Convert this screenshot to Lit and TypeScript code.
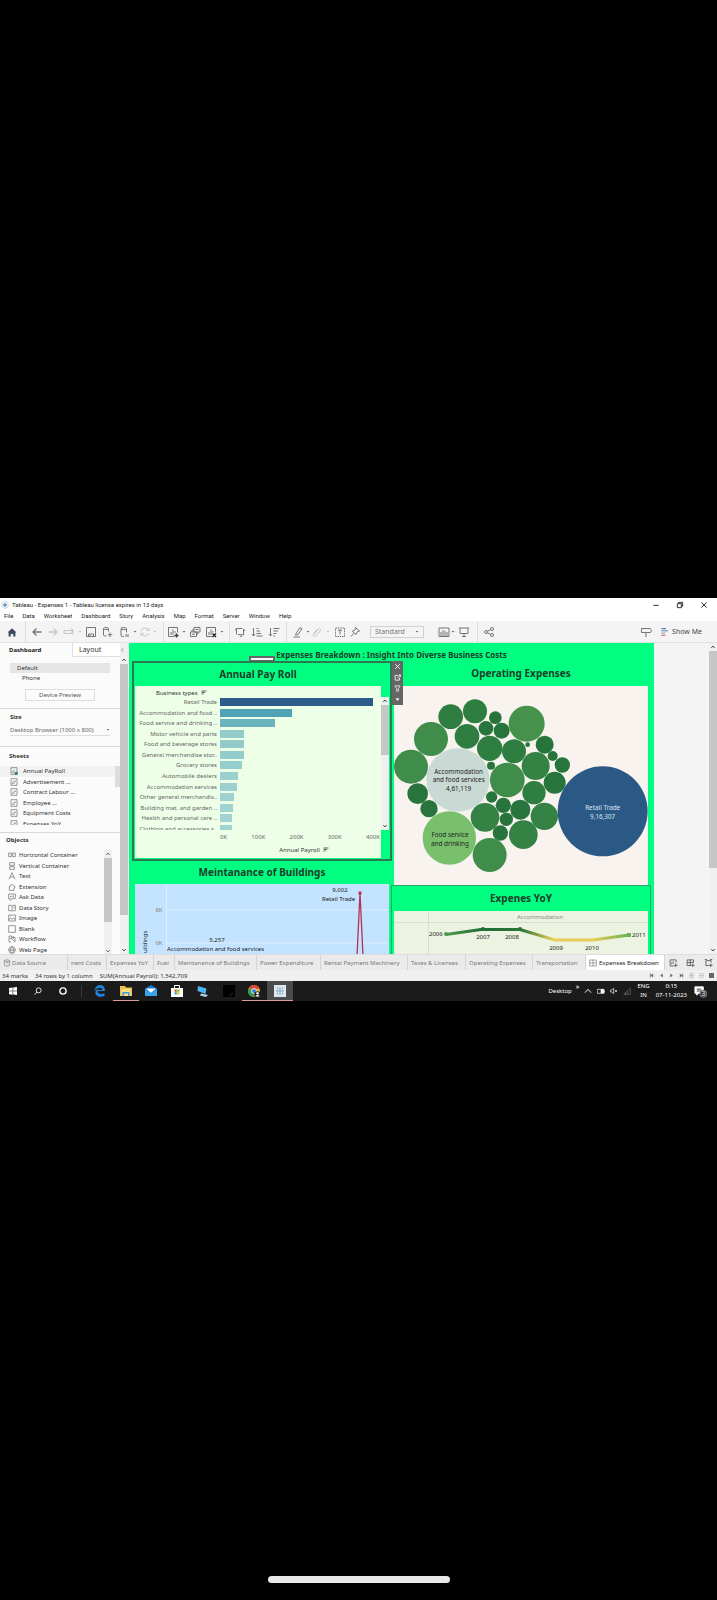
import { LitElement, html, svg, css, nothing } from "lit";
import { customElement, state } from "lit/decorators.js";

type Tool = { icon: string; gap: number; label?: string; dim?: boolean };

/* Glyphs are drawn on a 12 x 12 field. */
const glyphs: Record<string, unknown> = {
  home: svg`<path d="M1.500 6.500 6 2.200l4.500 4.300H9.400v4H7.200V8H4.800v2.500H2.600v-4z" fill="#3f4b5c" stroke="none"/>`,
  back: svg`<path d="M10.500 6H2M5.500 2.500 2 6l3.500 3.500" stroke-width="1.300"/>`,
  forward: svg`<path d="M1.500 6H10M6.500 2.500 10 6 6.500 9.500" stroke-width="1.300"/>`,
  replay: svg`<path d="M1 4.500h9v3H1zM8 2.500l2.500 2L8 6.500"/>`,
  save: svg`<path d="M1.500 1.500h9v9h-9zM3.500 10V8h5v2M5 9v1.500"/>`,
  datanew: svg`<path d="M2.500 2.500c0-1.300 5-1.300 5 0v3M2.500 2.500v6.500c0 .8 1.500 1 3 1M2.500 2.700c0 1.200 5 1.200 5 0M9 6.500v4.500M6.800 8.700h4.500"/>`,
  datapause: svg`<path d="M3 2.500c0-1.300 5.500-1.300 5.500 0v4M3 2.500v7c0 .8 1.500 1 3 1M3 2.700c0 1.200 5.500 1.200 5.500 0M8 8v3M10 8v3"/>`,
  refresh: svg`<path d="M10 4.500A4.300 4.300 0 0 0 2 5M2 7.500A4.300 4.300 0 0 0 10 7M10 2v2.500H7.500M2 10V7.500h2.500"/>`,
  chartnew: svg`<path d="M7.500 10.500h-6v-9h9v5M4 9V6M6 9V3.500M8 7V5"/><path d="M9.500 7.500v4M7.500 9.500h4" stroke="#333" stroke-width="1.300"/>`,
  duplicate: svg`<path d="M5 1.500h6v4.500H5zM1.500 6h6v4.500h-6zM3 6V4h2M9 6v2H7.500M6.500 3.500h3M3 8.300h3"/>`,
  chartclear: svg`<path d="M7 10.500H1.500v-9h9v5M4 9V6M6 9V3.500M8 6.500V5"/><path d="m7.500 7.500 3.500 3.500m0-3.500L7.500 11" stroke="#222" stroke-width="1.300"/>`,
  swap: svg`<path d="M2.500 8.500v-6h6M2.500 2.500 1 4.500M4 8.500 9.500 9V3M8 9.500l-2 1.500M9.500 3l1.500 2"/>`,
  sortasc: svg`<path d="M2.500 2v8M1 8.200 2.500 10 4 8.200M5.500 10h6M5.500 7.500h4.500M5.500 5h3.500M5.500 2.500h2"/>`,
  sortdesc: svg`<path d="M2.500 2v8M1 8.200 2.500 10 4 8.200M5.500 2.500h6M5.500 5h4.500M5.500 7.500h3M5.500 10h1.500"/>`,
  pen: svg`<path d="M4 7.500 8 1.500l2 1.300L6 8.500 3.500 9zM1.500 11H8"/>`,
  clip: svg`<path d="M3 8.500 7.500 3c1-1.200 3 .2 2 1.500L5 10c-1.200 1.500-3.800-.5-2.500-2L6.500 3"/>`,
  text: svg`<path d="M1.500 2h9v8.500h-9z" stroke-dasharray="1.500 .8"/><path d="M4 4.200h4M6 4.200V8.500"/>`,
  pin: svg`<path d="m6.500 1.500 4 3.500-2 .5-1.500 3-3.700-3.200L6 4zM4.500 7.500 2 10.500"/>`,
  cards: svg`<path d="M1 2h10v8.500H1zM3 10V6M5 10V4M7 10V5M9 10V6"/>`,
  present: svg`<path d="M1 2h10M2 2v5.500h8V2M6 7.500v3M4 10.500h4"/>`,
  share: svg`<circle cx="3" cy="6" r="1.500"/><circle cx="9" cy="3" r="1.500"/><circle cx="9" cy="9" r="1.500"/><path d="m4.300 5.300 3.400-1.600M4.300 6.700l3.400 1.600"/>`,
  guide: svg`<path d="M1.500 2.500h9l1 2-1 2h-9zM6 6.500V11"/>`,
  showme: svg`<path d="M2 1h7" stroke="#4471a8" stroke-width="1.600"/><path d="M2 4.300h10" stroke="#4471a8" stroke-width="1.300"/><path d="M2 7.600h6" stroke="#888" stroke-width="1.300"/><path d="M2 11h6" stroke="#e05a5a" stroke-width="1.600"/>`,
  sheet: svg`<path d="M1.500 1h9v10h-9zM4 9V6.500M6 9V4M8 6V4"/>`,
  sheetused: svg`<path d="M1.500 1h9v10h-9zM4 9V6.500M6 9V4"/><circle cx="9.500" cy="9.500" r="2.500" fill="#2a7f93" stroke="none"/>`,
  hbox: svg`<path d="M1 3h4v5.500H1zM7 3h4v5.500H7z"/>`,
  vbox: svg`<path d="M2.500 1h7v4h-7zM2.500 7h7v4h-7z"/>`,
  letter: svg`<path d="M1.500 11 6 1l4.500 10M3.200 7.500h5.600"/>`,
  extension: svg`<path d="M2 5h2c-1-3 3-4 4-1l3 2-2 1.500V11H2z"/>`,
  ask: svg`<path d="M1 1.500h10v7H6L3 11V8.500H1zM4 6.500v-2M6 6.500V4M8 6.500V3.500"/>`,
  story: svg`<path d="M1 2h4l1 1 1-1h4v8H7l-1 1-1-1H1zM6 3v7M8 5h2"/>`,
  image: svg`<path d="M1 1.500h10v9H1zM1 9l3-3 2.500 2L8.500 6 11 8.500M4 3.500v1"/>`,
  blank: svg`<path d="M1 1h10v10H1z"/>`,
  workflow: svg`<path d="M1.500 1.500h4v4h-4zM5.500 3.500h5v7M1.500 6v4.500h3M6 6l4 4M8 2v4"/>`,
  globe: svg`<circle cx="6" cy="6" r="5"/><path d="M1 6h10M6 1c-3 3-3 7 0 10M6 1c3 3 3 7 0 10"/>`,
  cylinder: svg`<path d="M2 2.500c0-1.500 8-1.500 8 0v7c0 1.500-8 1.500-8 0zM2 3c0 1.500 8 1.500 8 0M5 6h3"/>`,
  dash: svg`<path d="M1 1.500h10v9H1zM6 1.500v9M1 6h10"/>`,
  newsheet: svg`<path d="M7 10.500H1.500v-8h8V6M3.500 8V6M5.500 8V4.500M9 7.500V12M7 9.700h4.500"/>`,
  newdash: svg`<path d="M7 10H1.500V2.500h8.500V6M5.700 2.500V10M1.500 6H10M9 7.500V12M7 9.700h4.500"/>`,
  newstory: svg`<path d="M7 10H2.500V3.500h7V6M1 2h3M8 2h3M9 7.500V12M7 9.700h4.500"/>`,
  close: svg`<path d="m2 2 8 8m0-8-8 8" stroke-width="1.500"/>`,
  open: svg`<path d="M7 2.500H2v8h7.500V6M6 7l5-5.500M8 1.500h3V5" stroke-width="1.400"/>`,
  funnel: svg`<path d="M1.500 1.500h9L7.500 6v4.500h-3V6z" stroke-width="1.300"/>`,
  more: svg`<path d="m3.500 4.500 2.500 3 2.500-3z" fill="currentColor"/>`,
  up: svg`<path d="m2.500 8 3.500-4 3.500 4" stroke-width="1.800"/>`,
  down: svg`<path d="m2.500 4 3.500 4 3.500-4" stroke-width="1.800"/>`,
  sorted: svg`<path d="M1 2h10M1 5h7M1 8h4" stroke-width="1.500"/>`,
};

const glyph = (name: string, cls = "") =>
  html`<svg class="glyph ${cls}" viewBox="0 0 12 12" aria-hidden="true">${glyphs[name]}</svg>`;

const tools: Tool[] = [
  { icon: "home", gap: 6, label: "Start page" },
  { icon: "|", gap: 7 },
  { icon: "back", gap: 5, label: "Undo" },
  { icon: "forward", gap: 4, label: "Redo", dim: true },
  { icon: "replay", gap: 4, label: "Replay", dim: true },
  { icon: "v", gap: 3, dim: true },
  { icon: "save", gap: 3, label: "Save" },
  { icon: "datanew", gap: 4, label: "New data source" },
  { icon: "datapause", gap: 5, label: "Pause updates" },
  { icon: "v", gap: 3 },
  { icon: "refresh", gap: 2, label: "Run update", dim: true },
  { icon: "v", gap: 2, dim: true },
  { icon: "|", gap: 6 },
  { icon: "chartnew", gap: 3, label: "New worksheet" },
  { icon: "v", gap: 3 },
  { icon: "duplicate", gap: 3, label: "Duplicate" },
  { icon: "chartclear", gap: 4, label: "Clear sheet" },
  { icon: "v", gap: 3 },
  { icon: "|", gap: 5 },
  { icon: "swap", gap: 4, label: "Swap" },
  { icon: "sortasc", gap: 5, label: "Sort ascending" },
  { icon: "sortdesc", gap: 5, label: "Sort descending" },
  { icon: "|", gap: 6 },
  { icon: "pen", gap: 5, label: "Highlight" },
  { icon: "v", gap: 2 },
  { icon: "clip", gap: 1, label: "Group members", dim: true },
  { icon: "v", gap: 3, dim: true },
  { icon: "text", gap: 4, label: "Show mark labels" },
  { icon: "pin", gap: 3, label: "Fix axes" },
  { icon: "fit", gap: 9 },
  { icon: "cards", gap: 14, label: "Show cards" },
  { icon: "v", gap: 1 },
  { icon: "present", gap: 3, label: "Presentation mode" },
  { icon: "|", gap: 7 },
  { icon: "share", gap: 5, label: "Share" },
];

const payroll: [string, number, string][] = [
  ["Retail Trade", 153, "#2b5c8a"],
  ["Accommodation and food ..", 72, "#4fa3b5"],
  ["Food service and drinking ..", 55, "#6ab4be"],
  ["Motor vehicle and parts", 24, "#93cbcb"],
  ["Food and beverage stores", 24, "#93cbcb"],
  ["General merchandise stor..", 24, "#94cccc"],
  ["Grocery stores", 22, "#96cdcd"],
  ["Automobile dealers", 18, "#9ad0ce"],
  ["Accommodation services", 17, "#9bd0ce"],
  ["Other general merchandis..", 14, "#9ed2d0"],
  ["Building mat. and garden ..", 13, "#9fd3d1"],
  ["Health and personal care ..", 12, "#a0d3d1"],
  ["Clothing and accessories s..", 12, "#a0d3d1"],
];

/* cx, cy, r: one bubble for each business type */
const bubbles: [number, number, number][] = [
  [182, 230, 37], [255, 214, 36], [316, 233, 19], [123, 297, 51], [288, 265, 22],
  [335, 272, 24], [410, 251, 54], [231, 289, 37], [299, 325, 38], [372, 334, 36],
  [413, 314, 7], [464, 314, 27], [488, 348, 15], [517, 375, 23], [63, 380, 51],
  [303, 377, 12], [437, 378, 42], [494, 428, 33], [352, 420, 52], [432, 458, 35],
  [83, 461, 31], [117, 506, 26], [305, 471, 17], [340, 496, 23], [391, 509, 30],
  [285, 532, 43], [349, 538, 20], [463, 529, 41], [331, 579, 23], [400, 584, 43],
  [299, 645, 51],
];
const bubbleFill = (r: number) =>
  r > 52 ? "#46924d" : r > 45 ? "#408d4b" : r > 39 ? "#348345" : r > 34 ? "#2e7d41" : "#27753c";

const sheets = ["Annual PayRoll", "Advertisement ...", "Contract Labour ...", "Employee ...", "Equipment Costs", "Expenses YoY"];
const objects: [string, string][] = [
  ["hbox", "Horizontal Container"], ["vbox", "Vertical Container"], ["letter", "Text"],
  ["extension", "Extension"], ["ask", "Ask Data"], ["story", "Data Story"],
  ["image", "Image"], ["blank", "Blank"], ["workflow", "Workflow"], ["globe", "Web Page"],
];
const tabs: [string, number][] = [
  ["nent Costs", 39], ["Expenses YoY", 47], ["Fuel", 21], ["Meintanance of Buildings", 82],
  ["Power Expenditure", 64], ["Rental Payment Machinery", 87], ["Taxes & Licenses", 58],
  ["Operating Expenses", 67], ["Transportation", 53],
];

const apps: [string, boolean, boolean, unknown][] = [
  ["Edge", false, false, svg`<path d="M1.500 7C2 3 4.500 1 7 1c3.500 0 5 2.500 5 6H4.500c.3 3.500 4.500 3.500 7 2.200v2.500C7.500 14 1.500 12.500 2.500 7.500 3 6 4.500 5 5.500 4.500 4.800 5 4.500 5.800 4.500 6h5C9 2.500 4 3 1.500 7z" fill="#1d84dc"/>`],
  ["File Explorer", true, false, svg`<path d="M1 2h5l1 1.500h6V12H1z" fill="#f0c14b"/><path d="M2.500 5h9v7h-9z" fill="#fbe08a"/><path d="M3.500 8h7v4H9V9.500H5V12H3.500z" fill="#3f9be0"/>`],
  ["Mail", false, false, svg`<path d="M1 4.500 7 1l6 3.500V12H1z" fill="#1674c9"/><path d="M2 4.500h10L7 9z" fill="#fff"/><path d="m1 5 6 4.500L13 5v7H1z" fill="#38a3ee"/>`],
  ["Store", false, false, svg`<path d="M4.500 4V1.500h5V4" fill="none" stroke="#fff"/><path d="M1 4h12v9H1z" fill="#fff"/><path d="M4.500 5.500h2.300v2.300H4.500z" fill="#e6502e"/><path d="M7.200 5.500h2.300v2.300H7.200z" fill="#7dba2c"/><path d="M4.500 8.200h2.300v2.300H4.500z" fill="#2a9de0"/><path d="M7.200 8.200h2.300v2.300H7.200z" fill="#f5ba2a"/>`],
  ["Remote PC", false, false, svg`<path d="m2 2 8.500 2.500L9.500 10 1.500 7z" fill="#4db4ee"/><path d="m5 9.500 7 1.500-2 2-6-1.500z" fill="#b9d7ea"/>`],
  ["Terminal", false, false, svg`<path d="M1 1h12v12H1z" fill="#000"/><path d="M10 8v3H7" stroke="#152638" fill="none"/>`],
  ["Chrome", true, false, svg`<circle cx="7" cy="7" r="6" fill="#e2b62c"/><path d="M7 7 1.800 4A6 6 0 0 1 12.200 4z" fill="#dd4636"/><path d="M7 7 1.800 4A6 6 0 0 0 7 13z" fill="#2d9e53"/><circle cx="7" cy="7" r="2.700" fill="#fff"/><circle cx="7" cy="7" r="2" fill="#3b7de0"/><circle cx="10.500" cy="10.500" r="3.300" fill="#222"/><circle cx="10.500" cy="9.300" r="1.200" fill="#fff"/><path d="M8.500 12.500c.5-2 3.500-2 4 0z" fill="#fff"/>`],
  ["Tableau", true, true, svg`<path d="M1 1h12v12H1z" fill="#dfe8ee"/><path d="M7 3v8M3 7h8M4.500 3.500v2M9.500 3.500v2M4.500 8.500v2M9.500 8.500v2" stroke="#7fa3bd" fill="none"/>`],
];

@customElement("app-root")
export class AppRoot extends LitElement {
  @state() private fit = "Standard";

  static styles = css`
    :host {
      display: flex;
      flex-direction: column;
      justify-content: center;
      position: relative;
      box-sizing: border-box;
      min-height: 100vh;
      padding-bottom: 1px;
      background: #000;
      color: #333;
      font: 6px/10px "Noto Sans", "Open Sans", sans-serif;
    }
    * { box-sizing: border-box; }
    button, select {
      font: inherit; color: inherit; background: none; border: 0; padding: 0; margin: 0;
      white-space: nowrap; appearance: none;
    }
    ul { list-style: none; margin: 0; padding: 0; }
    h1, h2, h3, p { margin: 0; font-size: inherit; font-weight: 700; }
    svg { display: block; }
    .glyph { width: 8px; height: 8px; fill: none; stroke: currentColor; stroke-width: 1; flex: none; }
    .window { background: #f4f4f4; }
    .titlebar { display: flex; align-items: center; height: 13px; background: #fff; padding: 0 8px 0 1px; gap: 3px; }
    .titlebar h1 { flex: 1; font: 6px/10px Roboto, "Noto Sans", sans-serif; color: #222; }
    .titlebar .caption { width: 24px; display: grid; justify-items: center; }
    .titlebar .captions { display: flex; margin-right: -7px; }
    .menu { display: flex; gap: 9px; height: 10px; align-items: center; background: #fff; padding: 0 4px; color: #222; font: 6px/10px Roboto, "Noto Sans", sans-serif; }
    .toolbar { display: flex; align-items: center; height: 22px; color: #757575; border-bottom: 1px solid #e2e2e2; }
    .toolbar .glyph { width: 12px; height: 12px; }
    .dim { opacity: 0.35; }
    .rule { width: 1px; height: 20px; background: #dcdcdc; }
    .caret { width: 4px; height: 2px; background: #666; clip-path: polygon(0 0, 100% 0, 50% 100%); }
    .grow { flex: 1; }
    .fit { width: 54px; height: 12px; border: 1px solid #d0d0d0; display: flex; align-items: center; padding: 0 4px; }
    .fit select { flex: 1; font-size: 7px; line-height: 10px; outline: 0; }
    .showme { display: flex; align-items: center; gap: 4px; margin: 0 15px 0 8px; font-size: 7px; color: #444; }
    .toolbar .showme .glyph { width: 8px; height: 8px; }
    .body { display: flex; height: 311px; overflow: hidden; }

    .side { width: 120px; background: #fbfbfb; display: flex; flex-direction: column; }
    .modes { display: flex; height: 14px; }
    .modes button { text-align: left; line-height: 12px; }
    .modes .on { width: 72px; padding-left: 9px; font-weight: 700; color: #222; }
    .modes .off { flex: 1; padding-left: 6px; font-size: 7px; background: #fff; border: solid #e0e0e0; border-width: 0 0 1px 1px; }
    .part { border-bottom: 1px solid #d8d8d8; }
    .devices { height: 52px; padding: 6px 10px 0; }
    .devices li { height: 10px; line-height: 10px; padding-left: 7px; }
    .devices li.on { background: #e6e6e6; }
    .devices li.sub { padding-left: 12px; }
    .devices button { display: block; margin: 6px auto 0; width: 70px; height: 12px; border: 1px solid #ddd; color: #555; }
    .size { height: 38px; padding: 3px 10px 0; }
    .pick { display: flex; align-items: center; height: 12px; margin-top: 2px; border-bottom: 1px solid #ddd; }
    .pick select { flex: 1; min-width: 0; color: #666; outline: 0; }
    .sheets { height: 86px; padding: 4px 0 0; }
    .sheets h3 { padding-left: 9px; }
    .listing { display: flex; height: 59px; margin-top: 5px; overflow: hidden; }
    .listing ul { flex: 1; height: 63px; display: grid; grid-template-rows: repeat(6, 1fr); }
    .listing li { display: flex; align-items: center; gap: 5px; padding-left: 10px; }
    .listing li.on { background: #f2f2f2; }
    .side .glyph { stroke: #666; }
    .thumb { width: 5px; height: 21px; background: #ddd; }
    .objects { flex: 1; overflow: hidden; padding: 2px 8px 0 6px; }
    .tray { display: flex; margin-top: 5px; }
    .tray ul { flex: 1; height: 105px; display: grid; grid-template-rows: repeat(10, 1fr); padding-left: 2px; }
    .tray li { display: flex; align-items: center; gap: 3px; }

    .bar { width: 8px; background: #f0f0f0; display: flex; flex-direction: column; align-items: center; color: #444; }
    .bar .glyph { width: 6px; height: 8px; }
    .bar i { width: 100%; background: #c6c6c6; }
    .bar .last { margin-top: auto; }
    .bar .t251 { height: 251px; }
    .bar .t217 { height: 217px; }
    .bar .t64 { height: 64px; }
    .bar .t50 { height: 50px; }
    .bar.outer { padding-top: 13px; position: relative; }
    .fold { position: absolute; top: 0; left: -1px; height: 13px; }
    .stage { flex: 1; display: flex; padding: 0 55px 0 1px; min-width: 0; }
    .board { position: relative; flex: 1; background: #00ff80; color: #1e3d2c; display: flex; flex-direction: column; }
    .board > h2 { font-size: 8px; line-height: 23px; height: 18px; text-align: center; }
    .cols { flex: 1; display: grid; grid-template-columns: 260fr 259fr; padding: 0 3px; min-height: 0; }
    .col { display: flex; flex-direction: column; min-width: 0; position: relative; }
    .card h3 { font-size: 10px; line-height: 25px; height: 25px; text-align: center; }
    .grip { position: absolute; left: 120px; top: 13px; width: 26px; height: 6px; background: #fff; border: 2px solid #666; }
    .palette { position: absolute; left: 100%; top: 0; width: 11px; height: 44px; background: #666; color: #fff; display: grid; grid-template-rows: repeat(4, 1fr); place-items: center; z-index: 1; }
    .palette .glyph { width: 7px; height: 7px; }
    .pay { border: 2px solid #2b7a52; height: 200px; padding: 0 1px; }
    .pay h3 { height: 23px; line-height: 23px; padding-right: 8px; }
    .frame { display: flex; align-items: flex-start; }
    .frame .bar { height: 133px; margin-top: 11px; }
    .plot { flex: 1; height: 172px; background: #eeffe8; color: #666; }
    .plot .head { display: flex; align-items: center; gap: 3px; height: 11px; padding: 2px 0 0 21px; color: #333; }
    .plot .glyph { width: 6px; height: 6px; }
    .rows { height: 133px; overflow: hidden; }
    .rows ul { height: 137px; display: grid; grid-template-rows: repeat(13, 1fr); }
    .rows li { display: grid; grid-template-columns: 82px 1fr; column-gap: 3px; align-items: center; }
    .rows span { text-align: right; white-space: nowrap; }
    .rows i { height: 8px; }
    .ticks { display: flex; justify-content: space-between; padding: 2px 0 0 85px; margin-right: 1px; }
    .axis { display: flex; align-items: center; justify-content: center; gap: 3px; padding: 3px 0 0 92px; color: #333; }
    .ops { height: 224px; padding: 0 3px 0 2px; }
    .ops svg { width: 100%; height: 199px; background: #f8f3ee; }
    .meint { padding: 0 3px; }
    .meint h3 { height: 23px; line-height: 23px; }
    .meint svg { width: 100%; height: 70px; background: #c3e3ff; }
    .yoy { border: 1px solid #26a565; border-bottom: 0; margin-left: -1px; padding: 0 2px; flex: 1; }
    .yoy svg { width: 100%; height: 43px; background: #edf3e1; }
    text { fill: #222; }
    .mid { text-anchor: middle; }
    .pale { fill: #888; }
    .light { fill: #dbe6f2; }

    .tabs { display: flex; height: 16px; background: #ebebeb; border-top: 1px solid #ddd; color: #777; }
    .tabs button { border-right: 1px solid #d4d4d4; text-align: left; padding-left: 3px; overflow: hidden; flex: none; }
    .tabs .source { width: 68px; display: flex; align-items: center; gap: 1px; }
    .tabs .on { width: 79px; background: #fff; color: #222; display: flex; align-items: center; gap: 2px; }
    .tabs .on .glyph { stroke: #777; }
    .tabs .new { display: flex; flex: 1; align-items: center; justify-content: space-around; color: #444; }
    .tabs .new button { border: 0; padding: 0; }
    .tabs .new .glyph { width: 9px; height: 9px; }
    .status { display: flex; align-items: center; gap: 7px; height: 11px; padding: 0 3px 0 2px; background: #f0f0f0; }
    .pager { display: flex; gap: 5px; color: #666; }
    .pager .glyph { width: 5px; height: 5px; stroke: none; }
    .pager .lines { stroke: currentColor; }

    .taskbar { display: flex; height: 20px; background: #1b1b1b; color: #fff; }
    .system { display: grid; grid-template-columns: repeat(3, 25px); width: 75px; place-items: center; }
    .taskbar .rule { margin: 4px 5px 4px 6px; height: 12px; background: #3a3a3a; }
    .apps { width: 206px; display: grid; grid-template-columns: repeat(8, 1fr); }
    .apps button { display: grid; place-items: center; border-bottom: 1px solid transparent; }
    .apps .live { border-bottom-color: #d99a9a; }
    .apps .active { background: #4b4b4b; }
    .apps svg { width: 14px; height: 14px; }
    .notify { display: flex; align-items: center; padding-right: 10px; }
    .notify .glyph { width: 8px; height: 8px; margin-left: 5px; }
    .notify p { font-weight: 400; line-height: 9px; text-align: center; margin-left: 6px; }
    .notify sup { font-size: 7px; line-height: 8px; margin: -8px 0 0 4px; }
    .notify .note { width: 13px; height: 13px; margin-left: 7px; }
    .home { position: absolute; bottom: 17px; left: 50%; margin-left: -91px; width: 182px; height: 7px; border-radius: 4px; background: #e8e8e8; }
  `;

  private tool(t: Tool) {
    const gap = `margin-left:${t.gap}px`;
    if (t.icon === "|") return html`<span class="rule" style=${gap}></span>`;
    if (t.icon === "v") return html`<span class="caret ${t.dim ? "dim" : ""}" style=${gap}></span>`;
    if (t.icon === "fit")
      return html`<label class="fit" style=${gap}>
        <select aria-label="Fit" .value=${this.fit} @change=${(e: Event) => (this.fit = (e.target as HTMLSelectElement).value)}>
          <option>Standard</option>
        </select><span class="caret"></span></label>`;
    return html`<button class=${t.dim ? "dim" : ""} style=${gap} aria-label=${t.label ?? ""}>${glyph(t.icon)}</button>`;
  }

  private scroll(cls: string, thumb: string, extra: unknown = nothing) {
    return html`<div class="bar ${cls}">${extra}${glyph("up")}<i class=${thumb}></i>${glyph("down", "last")}</div>`;
  }

  private sidebar() {
    return html`<aside class="side">
      <div class="modes"><button class="on">Dashboard</button><button class="off">Layout</button></div>
      <section class="part devices">
        <ul><li class="on">Default</li><li class="sub">Phone</li></ul>
        <button>Device Preview</button>
      </section>
      <section class="part size">
        <h3>Size</h3>
        <label class="pick"><select aria-label="Size"><option>Desktop Browser (1000 x 800)</option></select><span class="caret"></span></label>
      </section>
      <section class="part sheets">
        <h3>Sheets</h3>
        <div class="listing">
          <ul>${sheets.map((s, i) => html`<li class=${i ? "" : "on"}>${glyph(i ? "sheet" : "sheetused")}${s}</li>`)}</ul>
          <div class="thumb"></div>
        </div>
      </section>
      <section class="objects">
        <h3>Objects</h3>
        <div class="tray">
          <ul>${objects.map(([g, s]) => html`<li>${glyph(g)}${s}</li>`)}</ul>
          ${this.scroll("", "t64")}
        </div>
      </section>
    </aside>`;
  }

  private payrollCard() {
    return html`<section class="card pay">
      <h3>Annual Pay Roll</h3>
      <div class="frame">
        <div class="plot">
          <div class="head">Business types ${glyph("sorted")}</div>
          <div class="rows"><ul>
            ${payroll.map(([n, w, c]) => html`<li><span>${n}</span><i style="width:${w}px;background:${c}"></i></li>`)}
          </ul></div>
          <div class="ticks">${["0K", "100K", "200K", "300K", "400K"].map((t) => html`<span>${t}</span>`)}</div>
          <div class="axis">Annual Payroll ${glyph("sorted")}</div>
        </div>
        ${this.scroll("", "t50")}
      </div>
    </section>`;
  }

  private opsCard() {
    return html`<section class="card ops">
      <h3>Operating Expenses</h3>
      <svg viewBox="12 138 762 597" font-size="19">
        ${bubbles.map(([x, y, r]) => svg`<circle cx=${x} cy=${y} r=${r} fill=${bubbleFill(r)}/>`)}
        <circle cx="204" cy="420" r="95" fill="#c9dad4"/>
        <circle cx="178" cy="594" r="80" fill="#78c06c"/>
        <circle cx="638" cy="514" r="135" fill="#2b5985"/>
        <g class="mid">
          <text x="206" y="401">Accommodation</text>
          <text x="206" y="427">and food services</text>
          <text x="206" y="453">4,61,119</text>
          <text x="180" y="591">Food service</text>
          <text x="180" y="617">and drinking</text>
          <text class="light" x="638" y="511">Retail Trade</text>
          <text class="light" x="638" y="537">9,16,307</text>
        </g>
      </svg>
    </section>`;
  }

  private meintCard() {
    return html`<section class="card meint">
      <h3>Meintanance of Buildings</h3>
      <svg viewBox="135 884 254 70" font-size="6">
        <path d="M166 910H390M166 943H390M166.500 884V954" stroke="#e3f2ff" stroke-width=".8" fill="none"/>
        <text class="mid pale" x="159" y="912">8K</text>
        <text class="mid pale" x="159" y="945">6K</text>
        <text font-size="6" transform="translate(147 953) rotate(-90)">uildings</text>
        <path d="M357 956 360 893 363 956" fill="none" stroke="#b5305a" stroke-width="1.300"/>
        <path d="M358.500 891.500h3v3h-3z" fill="#b5305a"/>
        <text class="mid" x="340" y="892">9,002</text>
        <text x="322" y="901">Retail Trade</text>
        <text class="mid" x="217" y="942">5,257</text>
        <text x="167" y="951">Accommodation and food services</text>
      </svg>
    </section>`;
  }

  private yoyCard() {
    return html`<section class="card yoy">
      <h3>Expenes YoY</h3>
      <svg viewBox="394 911 254 43" font-size="6">
        <defs><linearGradient id="trend" gradientUnits="userSpaceOnUse" x1="446" x2="629" y1="0" y2="0">
          <stop offset="0" stop-color="#4f9a4a"/><stop offset=".2" stop-color="#1f6d38"/>
          <stop offset=".42" stop-color="#2f7638"/><stop offset=".58" stop-color="#e8cc55"/>
          <stop offset=".8" stop-color="#e8cc55"/><stop offset="1" stop-color="#6db150"/>
        </linearGradient></defs>
        <path d="M394 922.500H648M428.500 911V954" stroke="#d3d8c8" stroke-width=".8" fill="none"/>
        <text class="mid pale" x="540" y="919">Accommodation</text>
        <path d="M446 934.500 481 929.500H520L555 940H593L629 935" fill="none" stroke="url(#trend)" stroke-width="3"/>
        <circle cx="446" cy="934" r="2" fill="#4f9a4a"/><circle cx="483" cy="929" r="2" fill="#1f6d38"/>
        <circle cx="520" cy="929" r="2" fill="#2a7338"/><path d="M627 933h4v4h-4z" fill="#6db150"/>
        <text x="429" y="936">2006</text><text x="632" y="937">2011</text>
        <g class="mid">
          <text x="483" y="939">2007</text><text x="512" y="939">2008</text>
          <text x="556" y="950">2009</text><text x="592" y="950">2010</text>
        </g>
      </svg>
    </section>`;
  }

  render() {
    return html`
      <main class="window">
        <header class="titlebar">
          <svg class="glyph" viewBox="0 0 12 12"><circle cx="6" cy="6" r="5" stroke="#9cc0dc"/><path d="M6 3v6M3 6h6" stroke="#3d6f98" stroke-width="1.500"/></svg>
          <h1>Tableau - Expenses 1 - Tableau license expires in 13 days</h1>
          <div class="captions">
            <button class="caption" aria-label="Minimise"><svg class="glyph" viewBox="0 0 12 12"><path d="M2 6.500h8" stroke-width="1.500"/></svg></button>
            <button class="caption" aria-label="Restore"><svg class="glyph" viewBox="0 0 12 12"><path d="M2 4h6v6H2zM4 4V2h6v6H8" stroke-width="1.500"/></svg></button>
            <button class="caption" aria-label="Close">${glyph("close")}</button>
          </div>
        </header>
        <nav class="menu">${["File", "Data", "Worksheet", "Dashboard", "Story", "Analysis", "Map", "Format", "Server", "Window", "Help"].map((m) => html`<button>${m}</button>`)}</nav>
        <div class="toolbar">
          ${tools.map((t) => this.tool(t))}
          <span class="grow"></span>
          <button aria-label="Data guide">${glyph("guide")}</button>
          <button class="showme">${glyph("showme")}Show Me</button>
        </div>
        <div class="body">
          ${this.sidebar()}
          ${this.scroll("outer", "t251", html`<button class="fold" aria-label="Collapse pane"><svg class="glyph" viewBox="0 0 12 12"><path d="M8 2.500 5 6l3 3.500"/></svg></button>`)}
          <div class="stage">
            <div class="board">
              <h2>Expenses Breakdown : Insight Into Diverse Business Costs</h2>
              <span class="grip"></span>
              <div class="cols">
                <div class="col">
                  ${this.payrollCard()}${this.meintCard()}
                  <div class="palette">${[["close", "Remove"], ["open", "Go to sheet"], ["funnel", "Use as filter"], ["more", "More options"]].map(([g, l]) => html`<button aria-label=${l}>${glyph(g)}</button>`)}</div>
                </div>
                <div class="col">${this.opsCard()}${this.yoyCard()}</div>
              </div>
            </div>
          </div>
          ${this.scroll("", "t217")}
        </div>
        <nav class="tabs">
          <button class="source">${glyph("cylinder")}Data Source</button>
          ${tabs.map(([t, w]) => html`<button style="width:${w}px">${t}</button>`)}
          <button class="on">${glyph("dash")}Expenses Breakdown</button>
          <div class="new">
            <button aria-label="New worksheet">${glyph("newsheet")}</button>
            <button aria-label="New dashboard">${glyph("newdash")}</button>
            <button aria-label="New story">${glyph("newstory")}</button>
          </div>
        </nav>
        <footer class="status">
          <span>34 marks</span><span>34 rows by 1 column</span><span>SUM(Annual Payroll): 1,542,709</span>
          <span class="grow"></span>
          <div class="pager">
            ${["M2 1h2v10H2zM10 1 4 6l6 5z", "M9 1 3 6l6 5z", "m3 1 6 5-6 5z", "M8 1h2v10H8zM2 1l6 5-6 5z"].map((d) => html`<svg class="glyph" viewBox="0 0 12 12"><path d=${d} fill="currentColor"/></svg>`)}
            <svg class="glyph dim lines" viewBox="0 0 12 12"><path d="M0 2h12M0 6h12M0 10h12M6 0v12" stroke-width="2"/></svg>
            <svg class="glyph dim lines" viewBox="0 0 12 12"><path d="M0 2h12M0 6h12M0 10h12" stroke-width="2"/></svg>
            <svg class="glyph" viewBox="0 0 12 12"><path d="M0 0h12v12H0z" fill="currentColor"/></svg>
          </div>
        </footer>
        <footer class="taskbar">
          <div class="system">
            <button aria-label="Start"><svg class="glyph" viewBox="0 0 12 12"><path d="M0 1.500 5.500.8v5H0zM6.300.7 12 0v5.800H6.300zM0 6.500h5.500v5L0 10.800zM6.300 6.500H12V12l-5.700-.7z" fill="#fff" stroke="none"/></svg></button>
            <button aria-label="Search"><svg class="glyph" viewBox="0 0 12 12"><circle cx="7" cy="5" r="3.700" stroke-width="1.300"/><path d="M4.300 7.700 1 11.500" stroke-width="1.300"/></svg></button>
            <button aria-label="Cortana"><svg class="glyph" viewBox="0 0 12 12"><circle cx="6" cy="6" r="4.700" stroke-width="2"/></svg></button>
          </div>
          <span class="rule"></span>
          <div class="apps">${apps.map(([n, live, active, art]) => html`<button aria-label=${n} class="${live ? "live" : ""} ${active ? "active" : ""}"><svg viewBox="0 0 14 14">${art}</svg></button>`)}</div>
          <span class="grow"></span>
          <div class="notify">
            <span>Desktop</span><sup>»</sup>
            <svg class="glyph" viewBox="0 0 12 12"><path d="m1.500 8.500 4.500-5 4.500 5" stroke-width="1.400"/></svg>
            <svg class="glyph" viewBox="0 0 12 12"><path d="M.5 3.500h10v6H.5zM11.500 5v3"/><path d="M6 4h4v5H6z" fill="#fff"/></svg>
            <svg class="glyph" viewBox="0 0 12 12"><path d="M.5 4.500h2l3-2.500v8l-3-2.500h-2zM7.500 4.500l3 3m0-3-3 3"/></svg>
            <svg class="glyph dim" viewBox="0 0 12 12"><path d="M1 11 11 2v9zM4 11V8M7 11V6"/></svg>
            <p>ENG<br />IN</p>
            <p>0:15<br />07-11-2023</p>
            <svg class="glyph note" viewBox="0 0 14 14"><path d="M1 2h9v7H5l-2 2V9H1z" fill="#fff"/><path d="M3 4.500h5M3 6.500h5" stroke="#333"/><circle cx="10" cy="9.500" r="3.800" fill="#444" stroke="#888"/><text x="10" y="12" class="mid light" stroke="none" font-size="7">3</text></svg>
          </div>
        </footer>
      </main>
      <div class="home"></div>
    `;
  }
}
